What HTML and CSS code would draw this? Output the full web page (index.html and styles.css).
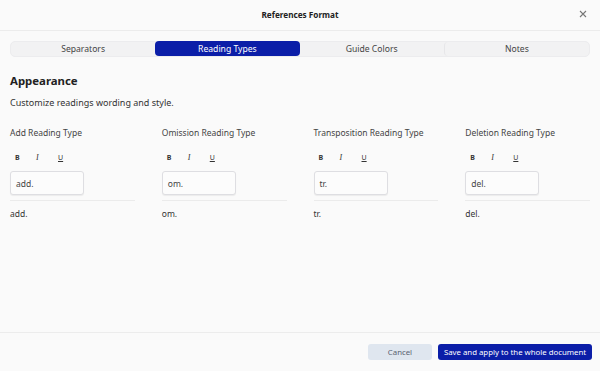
FILE: index.html
```html
<!DOCTYPE html>
<html>
<head>
<meta charset="utf-8">
<link rel="stylesheet" href="styles.css">
</head>
<body>
<div class="dialog">
  <header class="head">
    <div class="title">References Format</div>
    <div class="close">
      <svg width="8" height="8" viewBox="0 0 8 8"><path d="M1 1L7 7M7 1L1 7" stroke="#777" stroke-width="1.1"/></svg>
    </div>
  </header>
  <main class="content">
    <nav class="tabs">
      <div class="tab">Separators</div>
      <div class="tab active">Reading Types</div>
      <div class="tab">Guide Colors</div>
      <div class="tab divided">Notes</div>
    </nav>
    <h2 class="heading">Appearance</h2>
    <p class="desc">Customize readings wording and style.</p>
    <div class="grid">
      <div class="col">
        <div class="label">Add Reading Type</div>
        <div class="fmt"><span class="b">B</span><span class="i">I</span><span class="u">U</span></div>
        <div class="input">add.</div>
        <div class="rule"></div>
        <div class="preview">add.</div>
      </div>
      <div class="col">
        <div class="label">Omission Reading Type</div>
        <div class="fmt"><span class="b">B</span><span class="i">I</span><span class="u">U</span></div>
        <div class="input">om.</div>
        <div class="rule"></div>
        <div class="preview">om.</div>
      </div>
      <div class="col">
        <div class="label">Transposition Reading Type</div>
        <div class="fmt"><span class="b">B</span><span class="i">I</span><span class="u">U</span></div>
        <div class="input">tr.</div>
        <div class="rule"></div>
        <div class="preview">tr.</div>
      </div>
      <div class="col">
        <div class="label">Deletion Reading Type</div>
        <div class="fmt"><span class="b">B</span><span class="i">I</span><span class="u">U</span></div>
        <div class="input">del.</div>
        <div class="rule"></div>
        <div class="preview">del.</div>
      </div>
    </div>
  </main>
  <footer class="foot">
    <button class="btn cancel">Cancel</button>
    <button class="btn save">Save and apply to the whole document</button>
  </footer>
</div>
</body>
</html>
```
FILE: styles.css
```css
* { box-sizing: border-box; }
html, body { margin: 0; padding: 0; }
body {
  width: 600px;
  height: 371px;
  background: #fafafa;
  font-family: "Noto Sans", "Open Sans", sans-serif;
  color: #333;
  overflow: hidden;
}
.dialog {
  display: flex;
  flex-direction: column;
  height: 371px;
}
.head {
  height: 31px;
  border-bottom: 1px solid #ececec;
  display: flex;
  align-items: center;
  justify-content: center;
  position: relative;
}
.title {
  font-size: 8.2px;
  font-weight: 700;
  color: #222;
  margin-top: -2px;
}
.close {
  position: absolute;
  right: 13px;
  top: 10px;
  width: 8px;
  height: 8px;
  display: flex;
}
.content {
  flex: 1;
  padding: 10px 10px 0;
}
.tabs {
  display: flex;
  height: 16px;
  background: #f2f2f3;
  border: 1px solid #ececee;
  border-radius: 5px;
}
.tab {
  flex: 1;
  display: flex;
  align-items: center;
  justify-content: center;
  font-size: 8.6px;
  color: #444;
  border-radius: 4px;
}
.tab.active {
  background: #0b1ea8;
  color: #fff;
  margin: -1px 0 0;
  height: 15px;
}
.tab.divided {
  border-left: 1px solid #e6e6e8;
}
.heading {
  margin: 16px 0 0;
  font-size: 11.4px;
  line-height: 16px;
  font-weight: 700;
  color: #222;
}
.desc {
  margin: 8px 0 0;
  font-size: 9px;
  line-height: 12px;
  color: #333;
}
.grid {
  display: grid;
  grid-template-columns: repeat(4, 1fr);
  column-gap: 27px;
  margin-top: 18px;
}
.col {
  display: flex;
  flex-direction: column;
}
.label {
  font-size: 8.5px;
  line-height: 12px;
  color: #444;
}
.fmt {
  display: flex;
  margin-top: 12px;
  height: 12px;
  align-items: center;
  padding-left: 5px;
}
.fmt span {
  font-size: 7px;
  color: #333;
}
.fmt .b { font-weight: 700; width: 21px; }
.fmt .i {
  font-family: "Liberation Serif", serif;
  font-style: italic;
  font-size: 8px;
  width: 22px;
}
.fmt .u { text-decoration: underline; }
.input {
  margin-top: 8px;
  width: 74px;
  height: 24px;
  border: 1px solid #dedee2;
  border-radius: 3px;
  background: #fcfcfc;
  box-shadow: 0 1px 1px rgba(0,0,0,0.06);
  font-size: 8.5px;
  display: flex;
  align-items: center;
  padding-left: 5px;
  color: #444;
}
.rule {
  margin-top: 5px;
  height: 1px;
  background: #ebebeb;
}
.preview {
  margin-top: 7px;
  font-size: 8.5px;
  line-height: 12px;
  color: #333;
}
.foot {
  height: 39px;
  border-top: 1px solid #ececec;
  display: flex;
  justify-content: flex-end;
  align-items: flex-start;
  padding: 11px 8px 0 0;
  gap: 6px;
}
.btn {
  border: none;
  border-radius: 3px;
  height: 16px;
  font-family: inherit;
  font-size: 7.8px;
  padding: 0;
}
.cancel {
  width: 64px;
  background: #dfe6ef;
  color: #5a6270;
}
.save {
  width: 154px;
  background: #0b1ea8;
  color: #fff;
}
```
